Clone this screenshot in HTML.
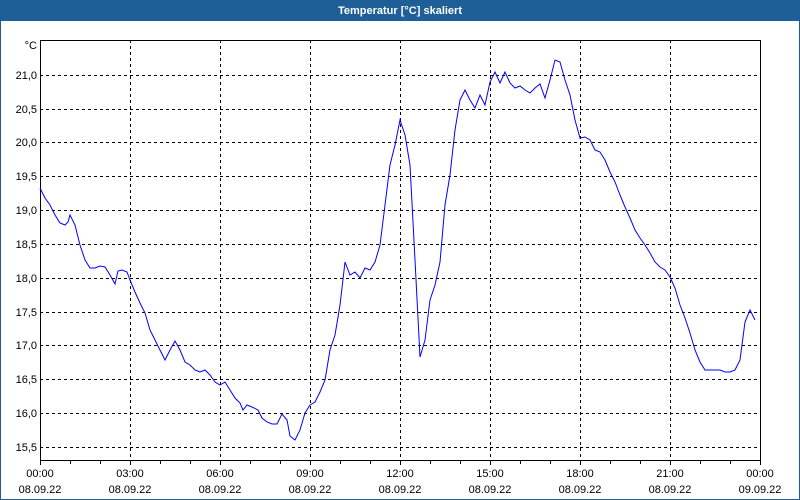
<!DOCTYPE html>
<html><head><style>
body{margin:0;width:800px;height:500px;overflow:hidden;background:#fff;font-family:"Liberation Sans",sans-serif}
</style></head><body>
<svg width="800" height="500" xmlns="http://www.w3.org/2000/svg" style="display:block">
<rect x="0" y="0" width="800" height="500" fill="#fff"/>
<rect x="0.5" y="0.5" width="799" height="499" fill="none" stroke="#1d5f96"/>
<rect x="0" y="0" width="800" height="21" fill="#1d5f96"/>
<text x="400" y="14" text-anchor="middle" font-size="11" font-weight="bold" fill="#fff" font-family="Liberation Sans,sans-serif">Temperatur [°C] skaliert</text>
<g stroke="#000" stroke-dasharray="3,3" stroke-width="1">
<path d="M40 75.5H760M40 109.5H760M40 142.5H760M40 176.5H760M40 210.5H760M40 244.5H760M40 278.5H760M40 312.5H760M40 345.5H760M40 379.5H760M40 413.5H760M40 447.5H760"/>
<path d="M130.5 40V460M220.5 40V460M310.5 40V460M400.5 40V460M490.5 40V460M580.5 40V460M670.5 40V460"/>
</g>
<g stroke="#000" stroke-width="1" fill="none">
<path d="M40.5 40V460.5H760.5V40M40 40.5H760"/>
<path d="M40.5 461v4M70.5 461v3M100.5 461v3M130.5 461v4M160.5 461v3M190.5 461v3M220.5 461v4M250.5 461v3M280.5 461v3M310.5 461v4M340.5 461v3M370.5 461v3M400.5 461v4M430.5 461v3M460.5 461v3M490.5 461v4M520.5 461v3M550.5 461v3M580.5 461v4M610.5 461v3M640.5 461v3M670.5 461v4M700.5 461v3M730.5 461v3M760.5 461v4"/>
</g>
<g font-size="11" fill="#000" text-anchor="end" font-family="Liberation Sans,sans-serif">
<text x="37" y="49">°C</text>
<text x="37" y="79">21,0</text><text x="37" y="113">20,5</text><text x="37" y="146">20,0</text><text x="37" y="180">19,5</text><text x="37" y="214">19,0</text><text x="37" y="248">18,5</text><text x="37" y="282">18,0</text><text x="37" y="316">17,5</text><text x="37" y="349">17,0</text><text x="37" y="383">16,5</text><text x="37" y="417">16,0</text><text x="37" y="451">15,5</text>
</g>
<g font-size="11" fill="#000" text-anchor="middle" font-family="Liberation Sans,sans-serif">
<text x="40" y="477">00:00</text><text x="40" y="493">08.09.22</text>
<text x="130" y="477">03:00</text><text x="130" y="493">08.09.22</text>
<text x="220" y="477">06:00</text><text x="220" y="493">08.09.22</text>
<text x="310" y="477">09:00</text><text x="310" y="493">08.09.22</text>
<text x="400" y="477">12:00</text><text x="400" y="493">08.09.22</text>
<text x="490" y="477">15:00</text><text x="490" y="493">08.09.22</text>
<text x="580" y="477">18:00</text><text x="580" y="493">08.09.22</text>
<text x="670" y="477">21:00</text><text x="670" y="493">08.09.22</text>
<text x="760" y="477">00:00</text><text x="760" y="493">09.09.22</text>
</g>
<polyline fill="none" stroke="#0000ff" stroke-width="1" points="40,188 45,198 50,205 55,215 60,223 65,225 68,222 70,215 75,225 80,245 85,260 90,268 95,268 100,266 105,267 110,275 115,284 118,271 122,270 127,272 130,280 135,292 140,303 145,313 150,330 155,340 160,350 165,360 170,350 175,341 180,350 185,362 190,365 195,370 200,372 205,370 210,375 215,382 220,385 225,382 230,390 235,398 240,403 243,410 247,405 252,407 258,410 262,418 267,422 272,424 277,424 282,414 287,420 290,436 295,440 300,430 305,413 310,405 315,402 320,392 325,380 330,350 335,335 340,305 345,262 350,275 355,272 360,278 365,268 370,270 375,262 380,245 385,205 390,165 395,145 400,120 405,135 410,165 415,260 420,357 425,340 430,300 435,285 440,262 445,205 450,175 455,130 460,100 465,90 470,100 475,108 480,95 485,105 490,82 495,72 500,83 505,72 510,83 515,88 520,86 525,90 530,93 535,88 540,84 545,98 550,80 555,60 560,62 565,80 570,95 575,120 580,138 585,137 590,140 595,150 600,152 605,160 610,172 615,182 620,195 625,207 630,218 635,230 640,238 645,245 650,253 655,262 660,267 665,270 670,277 675,288 680,305 685,318 690,333 695,350 700,362 705,370 710,370 715,370 720,370 725,372 730,372 735,370 740,360 745,322 750,310 755,320"/>
</svg>
</body></html>
